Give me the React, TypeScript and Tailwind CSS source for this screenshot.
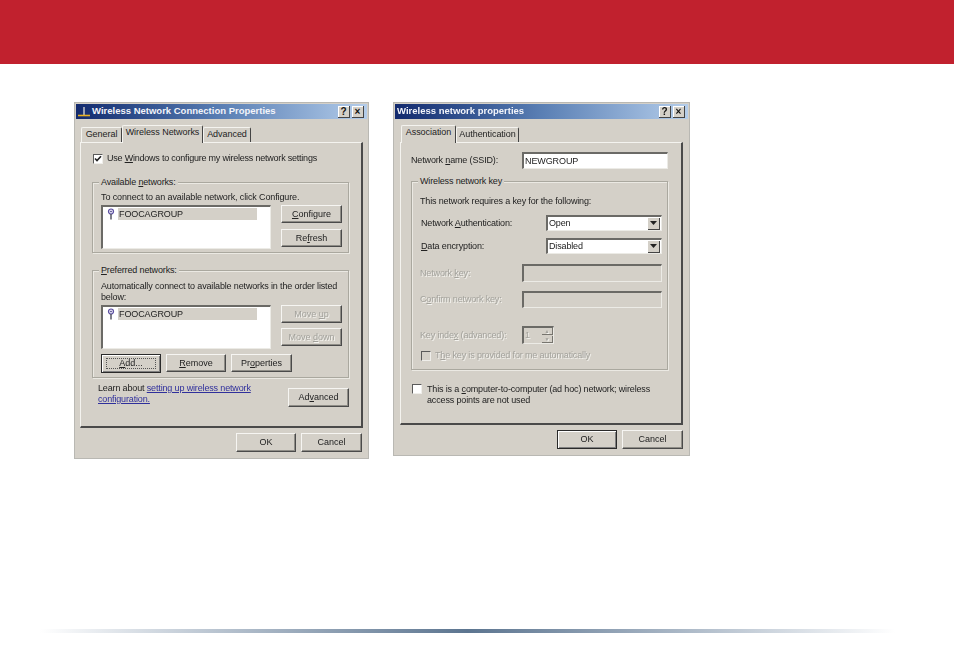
import type { ReactNode } from "react";

const font = "font-['Liberation_Sans',Arial,sans-serif]";
const disabledText = "text-[#a3a29c] [text-shadow:1px_1px_0_#f4f3ef]";

function Btn({
  w = "w-[61px]",
  h = "h-[18px]",
  def,
  off,
  focus,
  children,
}: {
  w?: string;
  h?: string;
  def?: boolean;
  off?: boolean;
  focus?: boolean;
  children: ReactNode;
}) {
  return (
    <div
      className={`${w} ${h} shrink-0 flex items-center justify-center bg-[#d4d0c8] text-[9px] tracking-normal ${
        def
          ? "border border-[#2a2a2a] shadow-[inset_1px_1px_0_#fff,inset_-1px_-1px_0_#808080]"
          : "border-r border-b border-[#4a4a4a] border-t border-l border-t-[#f6f5f2] border-l-[#f6f5f2] shadow-[inset_-1px_-1px_0_#8f8d87]"
      } ${off ? disabledText : "text-[#222]"}`}
    >
      {focus ? (
        <span className="flex items-center justify-center w-[50px] h-[11px] border border-dotted border-[#555]">
          <span>{children}</span>
        </span>
      ) : (
        <span>{children}</span>
      )}
    </div>
  );
}

function Check({ checked, off }: { checked?: boolean; off?: boolean }) {
  return (
    <div
      className={`w-[10px] h-[10px] shrink-0 border-t border-l border-[#5a5a5a] border-r border-b border-r-[#efeeea] border-b-[#efeeea] flex items-center justify-center ${
        off ? "bg-[#d4d0c8]" : "bg-white"
      }`}
    >
      {checked && (
        <svg width="8" height="8" viewBox="0 0 8 8">
          <path d="M1 3.5 L3 5.6 L7 1.2" fill="none" stroke="#222" strokeWidth="1.6" />
        </svg>
      )}
    </div>
  );
}

function Sunken({ className, children }: { className: string; children?: ReactNode }) {
  return (
    <div
      className={`${className} border-t-2 border-l-2 border-t-[#6b6a66] border-l-[#6b6a66] border-r border-b border-r-[#ecebe6] border-b-[#ecebe6]`}
    >
      {children}
    </div>
  );
}

function Group({
  className,
  label,
  children,
}: {
  className: string;
  label: ReactNode;
  children: ReactNode;
}) {
  return (
    <div className={`${className} relative border border-[#aaa89f] shadow-[inset_1px_1px_0_#ebe9e3,1px_1px_0_#ebe9e3]`}>
      <span className="absolute left-[6px] top-[-6px] px-[2px] bg-[#d4d0c8] text-[9px] leading-[11px] text-[#222]">
        {label}
      </span>
      {children}
    </div>
  );
}

function Network() {
  return (
    <Sunken className="w-[170px] h-[44px] bg-white pl-[3px] pt-[1px]">
      <div className="flex items-center h-[12px]">
        <svg width="12" height="12" viewBox="0 0 12 12" className="shrink-0">
          <circle cx="5" cy="3.5" r="2.5" fill="#e9e6f4" stroke="#5a4ea0" strokeWidth="1.2" />
          <circle cx="5" cy="3.5" r="0.8" fill="#3a3080" />
          <path d="M5 6 V11.5" stroke="#4a4a5a" strokeWidth="1.4" />
        </svg>
        <span className="flex items-center h-[12px] w-[139px] bg-[#d4d0c8] text-[9px] tracking-[-0.1px] pl-[1px] text-[#222]">
          FOOCAGROUP
        </span>
      </div>
    </Sunken>
  );
}

function TitleBar({ icon, title, left }: { icon?: ReactNode; title: string; left: string }) {
  return (
    <div className="h-[15px] mx-[1px] mt-[1px] flex items-center bg-gradient-to-r from-[#132a6e] via-[#5a7fb4] to-[#b4cdea]">
      <div className={`${left} flex items-center gap-[2px]`}>
        {icon}
        <span className="text-[9.5px] font-bold text-[#f2f4fa] whitespace-nowrap">{title}</span>
      </div>
      <div className="ml-auto mr-[3px] flex gap-[2px]">
        {["?", "×"].map((c) => (
          <div
            key={c}
            className="w-[12px] h-[12px] flex items-center justify-center bg-[#d4d0c8] text-[10px] font-bold text-[#111] border-r border-b border-[#444] shadow-[inset_1px_1px_0_#fff]"
          >
            {c}
          </div>
        ))}
      </div>
    </div>
  );
}

function Tab({ w, active, children }: { w: string; active?: boolean; children: ReactNode }) {
  return (
    <div
      className={`${w} flex items-center justify-center text-[9px] tracking-[-0.05px] text-[#222] bg-[#d4d0c8] border-t border-l border-[#f4f3ef] rounded-t-[2px] ${
        active
          ? "h-[18px] z-10 border-r border-r-[#444] pb-[3px]"
          : "h-[15px] self-end border-r border-r-[#444]"
      }`}
    >
      {children}
    </div>
  );
}

function Panel({ h, w, children }: { h: string; w: string; children: ReactNode }) {
  return (
    <div
      className={`${w} ${h} bg-[#d4d0c8] border-t border-l border-[#f4f3ef] border-r-2 border-b-2 border-r-[#4a4a4a] border-b-[#4a4a4a] text-[9px] leading-[11px] tracking-[-0.15px] text-[#222]`}
    >
      {children}
    </div>
  );
}

function Select({ value }: { value: string }) {
  return (
    <Sunken className="w-[116px] h-[16px] bg-white flex items-center justify-between pl-[1px] pr-[1px]">
      <span className="text-[9px] text-[#222]">{value}</span>
      <div className="w-[12px] h-[12px] bg-[#d4d0c8] border-r border-b border-[#444] flex items-center justify-center">
        <svg width="7" height="4" viewBox="0 0 7 4">
          <path d="M0 0 H7 L3.5 4 Z" fill="#222" />
        </svg>
      </div>
    </Sunken>
  );
}

function ConnectionDialog() {
  return (
    <div className="w-[295px] h-[357px] bg-[#d4d0c8] border border-[#b9b8b3]">
      <TitleBar
        left="pl-[2px]"
        title="Wireless Network Connection Properties"
        icon={
          <svg width="12" height="13" viewBox="0 0 12 13">
            <path d="M6 2 V10" stroke="#cfcfcf" strokeWidth="1.4" />
            <path d="M0 10.5 H12" stroke="#e8b020" strokeWidth="1.6" />
          </svg>
        }
      />
      <div className="flex h-[17px] mt-[6px] pl-[6px]">
        <Tab w="w-[41px]">General</Tab>
        <Tab w="w-[81px]" active>
          Wireless Networks
        </Tab>
        <Tab w="w-[48px]">Advanced</Tab>
      </div>
      <div className="pl-[5px]">
        <Panel w="w-[283px]" h="h-[286px]">
          <div className="flex items-center gap-[4px] mt-[10px] ml-[12px] h-[11px] tracking-[-0.22px]">
            <Check checked />
            <span>
              Use <u>W</u>indows to configure my wireless network settings
            </span>
          </div>
          <Group
            className="ml-[11px] mt-[18px] w-[257px] h-[71px] pl-[8px] pt-[9px]"
            label={
              <>
                Available <u>n</u>etworks:
              </>
            }
          >
            <div className="h-[13px] tracking-[-0.12px]">To connect to an available network, click Configure.</div>
            <div className="flex">
              <Network />
              <div className="ml-[10px] flex flex-col gap-[6px]">
                <Btn>
                  <u>C</u>onfigure
                </Btn>
                <Btn>
                  Re<u>f</u>resh
                </Btn>
              </div>
            </div>
          </Group>
          <Group
            className="ml-[11px] mt-[17px] w-[257px] h-[108px] pl-[8px] pt-[10px]"
            label={
              <>
                <u>P</u>referred networks:
              </>
            }
          >
            <div className="h-[24px] whitespace-nowrap">
              Automatically connect to available networks in the order listed
              <br />
              below:
            </div>
            <div className="flex">
              <Network />
              <div className="ml-[10px] flex flex-col gap-[5px]">
                <Btn off>
                  Move <u>u</u>p
                </Btn>
                <Btn off>
                  Move <u>d</u>own
                </Btn>
              </div>
            </div>
            <div className="flex gap-[5px] mt-[5px] items-start">
              <Btn def focus w="w-[60px]" h="h-[19px]">
                <u>A</u>dd...
              </Btn>
              <Btn w="w-[60px]">
                <u>R</u>emove
              </Btn>
              <Btn>
                Pr<u>o</u>perties
              </Btn>
            </div>
          </Group>
          <div className="flex ml-[17px] mt-[5px]">
            <div className="w-[191px] whitespace-nowrap">
              <span>Learn about </span>
              <span className="text-[#2f2f9c] underline">setting up wireless network</span>
              <br />
              <span className="text-[#2f2f9c] underline">configuration.</span>
            </div>
            <div className="mt-[5px] ml-[-1px]">
              <Btn h="h-[19px]">
                Ad<u>v</u>anced
              </Btn>
            </div>
          </div>
        </Panel>
      </div>
      <div className="flex justify-end gap-[5px] pr-[6px] mt-[5px]">
        <Btn w="w-[60px]" h="h-[19px]">
          OK
        </Btn>
        <Btn h="h-[19px]">Cancel</Btn>
      </div>
    </div>
  );
}

function NetworkDialog() {
  return (
    <div className="w-[297px] h-[354px] bg-[#d4d0c8] border border-[#b9b8b3]">
      <TitleBar left="pl-[2px]" title="Wireless network properties" />
      <div className="flex h-[17px] mt-[6px] pl-[7px]">
        <Tab w="w-[55px]" active>
          Association
        </Tab>
        <Tab w="w-[63px]">Authentication</Tab>
      </div>
      <div className="pl-[6px]">
        <Panel w="w-[283px]" h="h-[283px]">
          <div className="flex items-center ml-[10px] mt-[9px] h-[17px]">
            <span className="w-[111px]">
              Network <u>n</u>ame (SSID):
            </span>
            <Sunken className="w-[146px] h-[17px] bg-white flex items-center pl-[1px] text-[9px] tracking-[-0.1px]">
              NEWGROUP
            </Sunken>
          </div>
          <Group className="ml-[10px] mt-[12px] w-[257px] h-[189px] pt-[14px]" label="Wireless network key">
            <div className="ml-[8px] h-[12px]">This network requires a key for the following:</div>
            <div className="flex items-center ml-[9px] mt-[7px] h-[16px]">
              <span className="w-[125px]">
                Network <u>A</u>uthentication:
              </span>
              <Select value="Open" />
            </div>
            <div className="flex items-center ml-[9px] mt-[7px] h-[16px]">
              <span className="w-[125px]">
                <u>D</u>ata encryption:
              </span>
              <Select value="Disabled" />
            </div>
            <div className={`flex items-center ml-[8px] mt-[10px] h-[18px] ${disabledText}`}>
              <span className="w-[102px]">
                Network <u>k</u>ey:
              </span>
              <Sunken className="w-[140px] h-[18px]" />
            </div>
            <div className={`flex items-center ml-[8px] mt-[9px] h-[17px] ${disabledText}`}>
              <span className="w-[102px]">
                C<u>o</u>nfirm network key:
              </span>
              <Sunken className="w-[140px] h-[17px]" />
            </div>
            <div className={`flex items-center ml-[8px] mt-[18px] h-[18px] ${disabledText}`}>
              <span className="w-[102px]">
                Key inde<u>x</u> (advanced):
              </span>
              <Sunken className="w-[32px] h-[18px] flex items-center justify-between pl-[1px]">
                <span>1</span>
                <div className="flex flex-col w-[11px] gap-[1px]">
                  <div className="h-[7px] border-r border-b border-[#77756f] flex items-center justify-center text-[5px] leading-none">▲</div>
                  <div className="h-[7px] border-r border-b border-[#77756f] flex items-center justify-center text-[5px] leading-none">▼</div>
                </div>
              </Sunken>
            </div>
            <div className={`flex items-center gap-[4px] ml-[9px] mt-[6px] h-[11px] ${disabledText}`}>
              <Check off />
              <span>
                T<u>h</u>e key is provided for me automatically
              </span>
            </div>
          </Group>
          <div className="flex ml-[11px] mt-[14px] gap-[5px]">
            <Check />
            <div className="whitespace-nowrap">
              <span>This is a </span>
              <u>c</u>
              <span>omputer-to-computer (ad hoc) network; wireless</span>
              <br />
              <span>access points are not used</span>
            </div>
          </div>
        </Panel>
      </div>
      <div className="flex justify-end gap-[5px] pr-[6px] mt-[5px]">
        <Btn def w="w-[60px]" h="h-[19px]">
          OK
        </Btn>
        <Btn h="h-[19px]">Cancel</Btn>
      </div>
    </div>
  );
}

export default function App() {
  return (
    <div className={`w-[954px] h-[660px] bg-white flex flex-col overflow-hidden ${font}`}>
      <div className="h-[64px] bg-[#c1212e]" />
      <div className="flex gap-[24px] pl-[74px] pt-[38px] h-[565px] items-start blur-[0.5px]">
        <ConnectionDialog />
        <NetworkDialog />
      </div>
      <div className="ml-[40px] w-[855px] h-[4px] bg-gradient-to-r from-white via-[#5c7590] to-white" />
    </div>
  );
}
